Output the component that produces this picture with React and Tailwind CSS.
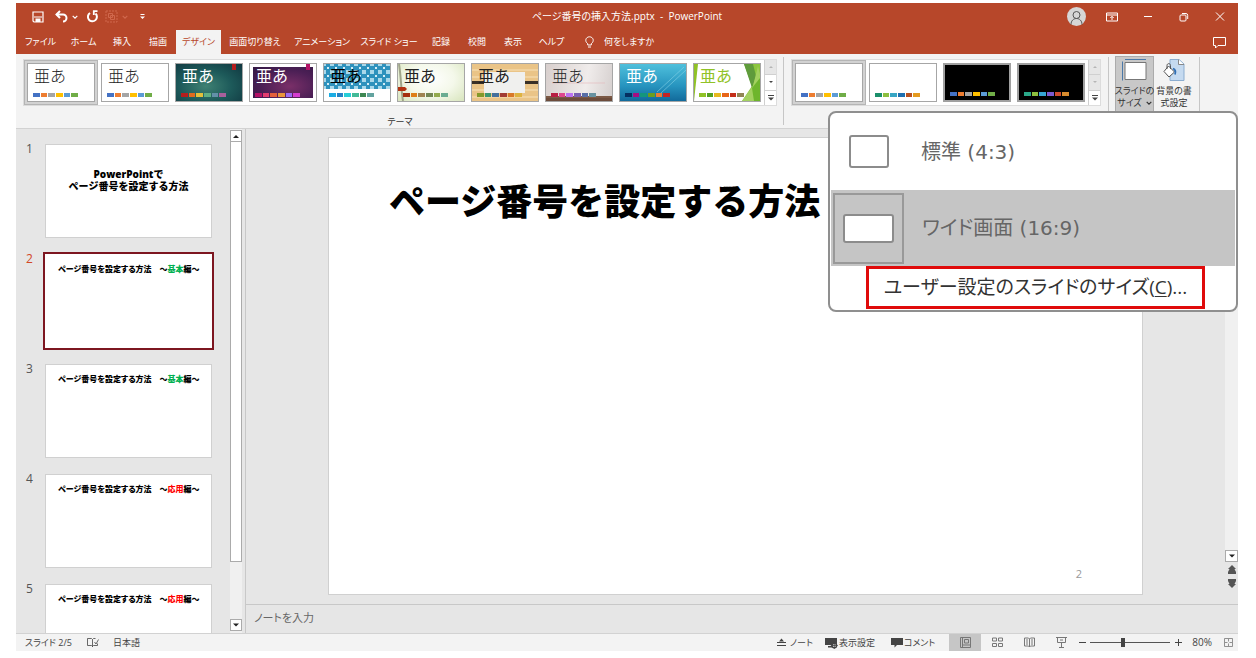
import { useState } from "react";

const tabs = [
  { label: "ファイル", width: "w-[45px]" },
  { label: "ホーム", width: "w-[41px]" },
  { label: "挿入", width: "w-9" },
  { label: "描画", width: "w-9" },
  { label: "デザイン", width: "w-[45px]" },
  { label: "画面切り替え", width: "w-[68px]" },
  { label: "アニメーション", width: "w-[66px]" },
  { label: "スライド ショー", width: "w-[68px]" },
  { label: "記録", width: "w-9" },
  { label: "校閲", width: "w-9" },
  { label: "表示", width: "w-9" },
  { label: "ヘルプ", width: "w-[41px]" },
];

const office = ["#4472c4", "#ed7d31", "#a5a5a5", "#ffc000", "#5b9bd5", "#70ad47"];

const themes = [
  { name: "Office", swatches: office, text: "font-light text-[#222]" },
  { name: "Office 2", swatches: office, text: "font-light text-[#222]" },
  {
    name: "イオン",
    swatches: ["#b31e1e", "#e06b1e", "#e3c03a", "#5fae84", "#6390a8", "#a8609c"],
    text: "text-white",
    bg: "bg-[radial-gradient(ellipse_at_45%_60%,#3f8173_0%,#1d5a5a_50%,#10363f_100%)]",
    art: <path d="M56 0h4v6h-4z" fill="#b31e1e" />,
  },
  {
    name: "イオン ボードルーム",
    swatches: ["#b31166", "#e33d6f", "#e45f3c", "#e9943a", "#9b6bf2", "#d53dd0"],
    text: "text-white",
    bg: "bg-[radial-gradient(ellipse_at_60%_60%,#7a2f68_0%,#4b1f55_50%,#2c1740_100%)]",
    art: (
      <>
        <path d="M1 1h64v35H1z" fill="none" stroke="#fff" strokeWidth="4" />
        <path d="M56 0h4v6h-4z" fill="#b31166" />
      </>
    ),
  },
  {
    name: "インテグラル",
    swatches: ["#1cade4", "#2683c6", "#27ced7", "#42ba97", "#3e8853", "#62a39f"],
    text: "text-black",
    bg: "bg-white",
    art: (
      <>
        <defs>
          <pattern id="integral" width="8" height="8" patternUnits="userSpaceOnUse">
            <path d="M0 0h8v8H0z" fill="#a9d8ea" />
            <path d="M2 0h4v2h2v4H6v2H2V6H0V2h2z" fill="#2e92bd" />
            <path d="M3 3h2v2H3z" fill="#d6eef6" />
          </pattern>
        </defs>
        <path d="M0 0h66v25H0z" fill="url(#integral)" />
      </>
    ),
  },
  {
    name: "ウィスプ",
    swatches: ["#a53010", "#de7e18", "#9f8351", "#728653", "#92aa4c", "#6aac91"],
    text: "text-[#222]",
    bg: "bg-[radial-gradient(ellipse_at_50%_40%,#ffffff_0%,#f4f8ea_50%,#d8e5bd_100%)]",
    art: (
      <>
        <path d="M1 0c2 12 2 25 4 37" fill="none" stroke="#a0a68a" strokeWidth="2" />
        <path d="M0 23h7l2 2-2 2H0z" fill="#b33512" />
      </>
    ),
  },
  {
    name: "オーガニック",
    swatches: ["#83992a", "#3c9770", "#44709d", "#a23c33", "#d97828", "#deb340"],
    text: "text-[#222]",
    bg: "bg-[#eac487]",
    art: (
      <>
        <path d="M0 6h66M0 13h66M0 26h66M0 33h66" stroke="#f1d3a0" strokeWidth="2" />
        <path d="M0 17h66v3H0z" fill="#3a3026" />
        <path d="M12 8h41v21H12z" fill="#f0f0ee" />
      </>
    ),
  },
  {
    name: "ギャラリー",
    swatches: ["#b71e42", "#de478e", "#bc72f0", "#795faf", "#586ea6", "#6892a0"],
    text: "font-light text-[#222]",
    bg: "bg-[linear-gradient(100deg,#d8cfcd,#f0eceb_60%,#d5cfce)]",
    art: (
      <>
        <path d="M0 32h66v5H0z" fill="#6d4c3b" />
        <path d="M0 33h66" stroke="#8b6650" />
        <path d="M6 19h53" stroke="#e4b5b9" strokeWidth=".6" />
      </>
    ),
  },
  {
    name: "スライス",
    swatches: ["#052f61", "#a50e82", "#14967c", "#6a9e1f", "#e87d37", "#c62324"],
    text: "text-white",
    bg: "bg-[linear-gradient(180deg,#4fc0dc,#2693be_60%,#126a9b)]",
    art: (
      <path d="M37 28 64 3M41 29 66 6" stroke="#8bd6ea" strokeWidth=".8" opacity=".7" />
    ),
  },
  {
    name: "ファセット",
    swatches: ["#90c226", "#54a021", "#e6b91e", "#e76618", "#c42f1a", "#918655"],
    text: "text-[#90c226]",
    bg: "bg-white",
    art: (
      <>
        <path d="M0 0h4L0 37z" fill="#90c226" />
        <path d="M50 0h16v37H48l10-15z" fill="#8cc63f" />
        <path d="M50 0h9l3 12-4 12z" fill="#5f9b3c" />
        <path d="m59 22 5-20 2 8v27H48z" fill="#a3d160" />
        <path d="m58 24 8-10v23h-6z" fill="#6eb52c" />
      </>
    ),
  },
];

const variants = [
  { name: "バリエーション 1", swatches: office, bg: "bg-white" },
  {
    name: "バリエーション 2",
    swatches: ["#1b8f6b", "#8cbf3f", "#37a6c4", "#1e6fb0", "#b8501f", "#e59a1e"],
    bg: "bg-white",
  },
  { name: "バリエーション 3", swatches: office, bg: "bg-black", dark: true },
  {
    name: "バリエーション 4",
    swatches: ["#2aa889", "#8cbf3f", "#37a6d4", "#7d5bd0", "#cf4a2c", "#d98b2e"],
    bg: "bg-black",
    dark: true,
  },
];

const slides = [
  { id: 1 },
  { id: 2, part: "基本", color: "text-[#00b050]" },
  { id: 3, part: "基本", color: "text-[#00b050]" },
  { id: 4, part: "応用", color: "text-[#ff0000]" },
  { id: 5, part: "応用", color: "text-[#ff0000]" },
];

function Icon({ children, className = "size-3", viewBox = "0 0 12 12" }) {
  return (
    <svg
      viewBox={viewBox}
      className={className}
      fill="none"
      stroke="currentColor"
      aria-hidden="true"
    >
      {children}
    </svg>
  );
}

function Chevron({ className = "size-[6px]" }) {
  return (
    <Icon className={className} viewBox="0 0 6 6">
      <path d="m.7 1.8 2.3 2.3 2.3-2.3" strokeWidth="1.2" />
    </Icon>
  );
}

function ArrowButton({ up, label }) {
  return (
    <button
      aria-label={label}
      className="flex h-3 w-full shrink-0 items-center justify-center border border-[#ababab] bg-white text-[#222]"
    >
      <Icon className="size-[6px]" viewBox="0 0 6 6">
        <path d={up ? "M0 5h6L3 2z" : "M0 1.500h6l-3 3z"} fill="currentColor" stroke="none" />
      </Icon>
    </button>
  );
}

function Thumb({ item, sample, selected, onClick }) {
  return (
    <button
      aria-label={item.name}
      aria-pressed={selected}
      onClick={onClick}
      className={`h-[45px] w-[74px] shrink-0 p-[3px] ${
        selected ? "bg-[#d2d2d2] ring-1 ring-[#b5b5b5] ring-inset" : ""
      }`}
    >
      <span
        className={`relative flex h-[39px] flex-col items-start overflow-hidden pb-1 pl-[5px] ${
          item.dark ? "border-2 border-[#a0a0a0]" : "border border-[#a6a6a6]"
        } ${item.bg || "bg-white"} ${sample ? "justify-between" : "justify-end"}`}
      >
        {item.art && (
          <svg
            viewBox="0 0 66 37"
            preserveAspectRatio="none"
            className="absolute inset-0 h-full w-full"
            aria-hidden="true"
          >
            {item.art}
          </svg>
        )}
        {sample && (
          <span
            className={`relative pt-[2px] pl-px text-base leading-5 [font-feature-settings:normal] ${item.text}`}
          >
            亜あ
          </span>
        )}
        <span className="relative flex w-[45px] gap-px">
          {item.swatches.map((color, i) => (
            <i key={i} className="h-1 flex-1" style={{ backgroundColor: color }} />
          ))}
        </span>
      </span>
    </button>
  );
}

function Gallery({ items, sample, disabled }) {
  const [selected, setSelected] = useState(0);

  return (
    <div className="flex h-[47px] shrink-0 border border-[#dcdcdc] bg-white">
      {items.map((item, i) => (
        <Thumb
          key={item.name}
          item={item}
          sample={sample}
          selected={selected === i}
          onClick={() => setSelected(i)}
        />
      ))}
      <div className="flex w-3 flex-col divide-y divide-[#d0d0d0] border-l border-[#d0d0d0]">
        <button
          aria-label="前の行"
          className="flex flex-1 items-center justify-center bg-[#e6e6e6] text-[#b5b5b5]"
        >
          <Icon className="size-1" viewBox="0 0 4 4">
            <path d="M0 3h4L2 1z" fill="currentColor" stroke="none" />
          </Icon>
        </button>
        <button
          aria-label="次の行"
          className={`flex flex-1 items-center justify-center ${
            disabled ? "bg-[#e6e6e6] text-[#b5b5b5]" : "text-[#444]"
          }`}
        >
          <Icon className="size-1" viewBox="0 0 4 4">
            <path d="M0 1h4L2 3z" fill="currentColor" stroke="none" />
          </Icon>
        </button>
        <button aria-label="その他" className="flex flex-1 items-center justify-center text-[#444]">
          <Icon className="size-[6px]" viewBox="0 0 6 6">
            <path d="M0 .5h6" />
            <path d="M0 2.500h6l-3 3z" fill="currentColor" stroke="none" />
          </Icon>
        </button>
      </div>
    </div>
  );
}

function TitleBar() {
  return (
    <div className="grid h-[27px] grid-cols-[1fr_auto_1fr] items-center">
      <div className="flex items-center pl-4">
        <button aria-label="上書き保存">
          <Icon>
            <path d="M1 1h10v10H2L1 10z" strokeWidth="1.200" />
            <path d="M3.500 11V7.500h5V11z" fill="currentColor" stroke="none" />
            <path d="M2 6h8" />
          </Icon>
        </button>
        <button aria-label="元に戻す" className="ml-[11px]">
          <Icon className="size-[13px]" viewBox="0 0 13 13">
            <path d="M1.500 4.500h6.500a3.500 3.500 0 0 1 0 7" strokeWidth="2" />
            <path d="M5 1 1.500 4.500 5 8" strokeWidth="2" />
          </Icon>
        </button>
        <button aria-label="元に戻す履歴" className="ml-1">
          <Chevron />
        </button>
        <button aria-label="やり直し" className="ml-2">
          <Icon className="size-[13px]" viewBox="0 0 13 13">
            <path d="M4 3A4.500 4.500 0 1 0 9.500 3.500" strokeWidth="2" />
            <path d="M7 1.200h4.500M7.800.5v4.500" strokeWidth="1.800" />
          </Icon>
        </button>
        <button aria-label="グループ化" className="ml-[6px] text-[#d0684d]">
          <Icon className="size-[13px]" viewBox="0 0 13 13">
            <path d="M1 1h11v11H1z" strokeDasharray="2 1" />
            <path d="M3.500 3.500h4v4h-4zM5.500 5.500h4v4h-4z" />
          </Icon>
        </button>
        <button aria-label="グループ化のオプション" className="ml-1 text-[#d0684d]">
          <Chevron />
        </button>
        <button aria-label="クイック アクセス ツール バーのユーザー設定" className="ml-3">
          <Icon className="size-[5px]" viewBox="0 0 5 5">
            <path d="M.5.500h4" />
            <path d="M0 2.500h5L2.500 5z" fill="currentColor" stroke="none" />
          </Icon>
        </button>
      </div>
      <h1 className="text-[10px] whitespace-pre">ページ番号の挿入方法.pptx  -  PowerPoint</h1>
      <div className="flex items-center justify-end">
        <button aria-label="アカウント" className="flex w-9 justify-center">
          <span className="flex size-[19px] items-end justify-center rounded-full bg-[#d6d6d6] text-[#555]">
            <Icon className="size-[17px]" viewBox="0 0 17 17">
              <circle cx="8.500" cy="6" r="3.500" />
              <path d="M3 15.500c0-8 11-8 11 0" />
            </Icon>
          </span>
        </button>
        <button aria-label="リボンの表示オプション" className="flex w-9 justify-center">
          <Icon>
            <path d="M.5 2h11v8H.5zM.5 4h11M6 9V5.500M4.300 7 6 5.300 7.700 7" />
          </Icon>
        </button>
        <button aria-label="最小化" className="flex w-9 justify-center">
          <Icon>
            <path d="M2 5.500h8" />
          </Icon>
        </button>
        <button aria-label="元に戻す (縮小)" className="flex w-9 justify-center">
          <Icon>
            <rect x="2" y="4" width="6" height="6" rx="1" />
            <path d="M4 2.500h4A1.800 1.800 0 0 1 9.700 4.300V8" />
          </Icon>
        </button>
        <button aria-label="閉じる" className="flex w-9 justify-center">
          <Icon>
            <path d="m2 1.500 8 8M10 1.500l-8 8" />
          </Icon>
        </button>
      </div>
    </div>
  );
}

function TabBar() {
  return (
    <nav className="flex h-6 items-stretch pl-[2px]">
      {tabs.map((tab) => (
        <button
          key={tab.label}
          className={`whitespace-nowrap ${tab.width} ${
            tab.label === "デザイン" ? "bg-[#f3f3f3] text-[#b7472a]" : ""
          }`}
        >
          {tab.label}
        </button>
      ))}
      <button className="ml-3 flex items-center gap-[9px]">
        <Icon className="h-3 w-[11px]" viewBox="0 0 11 12">
          <path d="M3.700 9V7.700C.2 5 1.900.8 5.500.8s5.300 4.200 1.800 6.900V9zM4 11h3" />
        </Icon>
        何をしますか
      </button>
      <button aria-label="コメント" className="mr-3 ml-auto">
        <Icon className="size-[13px]" viewBox="0 0 13 13">
          <path d="M.5 1.500h12v8H5L2.500 12V9.500h-2z" />
        </Icon>
      </button>
    </nav>
  );
}

function Ribbon() {
  return (
    <div className="flex h-[75px] border-b border-[#d2d2d2] bg-[#f3f3f3] text-[#333]">
      <section className="flex shrink-0 flex-col items-center pt-[5px] pr-[6px] pl-[7px]">
        <Gallery items={themes} sample />
        <h2 className="mt-2 leading-4">テーマ</h2>
      </section>
      <div className="my-[3px] w-px bg-[#c6c6c6]" />
      <section className="shrink-0 px-[7px] pt-[5px]">
        <Gallery items={variants} disabled />
      </section>
      <div className="my-[3px] w-px bg-[#c6c6c6]" />
      <section className="flex items-start gap-px px-[6px] pt-[2px] leading-3">
        <button className="flex h-[57px] w-[39px] flex-col items-center bg-[#c8c8c8] pt-[3px] whitespace-nowrap ring-1 ring-[#ababab] ring-inset">
          <Icon className="h-[22px] w-[26px]" viewBox="0 0 26 22">
            <path d="M3 .5h21M.5 2.500v19" stroke="#4a78a8" />
            <path d="M3 3.500h21v17H3z" fill="#fff" stroke="#777" />
          </Icon>
          <span className="mt-1">スライドの</span>
          <span className="flex items-center gap-1">
            サイズ
            <Chevron />
          </span>
        </button>
        <button className="flex h-[57px] w-[38px] flex-col items-center pt-[3px] whitespace-nowrap">
          <Icon className="h-[22px] w-[22px]" viewBox="0 0 22 22">
            <path d="M7 .5h9l5 4.500v16.500H7z" fill="#c5daf0" stroke="#8badd0" />
            <path d="M15.500.5V5.500H21" fill="#fff" stroke="#888" />
            <path d="m5.500 7 6 6-5.500 5-5-5.500z" fill="#fff" stroke="#555" />
            <path d="M4 10V6.500c0-2.500 3.500-2.500 3.500 0V10" stroke="#555" />
            <path d="M10 9.500c2.500 1 3 3 2 6" stroke="#2f6fb5" strokeWidth="1.800" />
          </Icon>
          <span className="mt-1">背景の書</span>
          <span>式設定</span>
        </button>
      </section>
      <div className="my-[3px] w-px bg-[#c6c6c6]" />
    </div>
  );
}

function SizeMenu() {
  return (
    <div
      role="menu"
      className="absolute top-[108px] right-0 z-10 flex h-[201px] w-[410px] flex-col rounded-lg border-2 border-[#8f8f8f] bg-white font-['DejaVu_Sans','Noto_Sans_CJK_JP',sans-serif] text-xl text-[#666]"
    >
      <button role="menuitem" className="flex h-[77px] items-center pl-[19px]">
        <span className="h-[33px] w-10 rounded-[3px] border-2 border-[#8c8c8c] bg-white" />
        <span className="pl-8">標準 (4:3)</span>
      </button>
      <button role="menuitem" className="mx-px flex h-[76px] items-center bg-[#c5c5c5] pl-[2px]">
        <span className="flex size-[71px] items-center justify-center border-2 border-[#999]">
          <span className="h-[29px] w-[51px] rounded-[3px] border-2 border-[#8c8c8c] bg-white" />
        </span>
        <span className="pl-[18px]">ワイド画面 (16:9)</span>
      </button>
      <button
        role="menuitem"
        className="ml-9 flex h-[43px] w-[339px] items-center justify-center border-3 border-[#e00b0b] font-['Open_Sans','Noto_Sans_CJK_JP',sans-serif] text-[19px] whitespace-nowrap text-[#333]"
      >
        <span>
          ユーザー設定のスライドのサイズ(<u className="underline-offset-2">C</u>)...
        </span>
      </button>
    </div>
  );
}

function SlidePanel() {
  const [current, setCurrent] = useState(2);

  return (
    <aside className="flex w-[230px] shrink-0 border-r border-[#c8c8c8]">
      <ol className="flex flex-1 flex-col gap-4 pt-[15px] pl-[10px]">
        {slides.map((slide) => (
          <li key={slide.id} className="flex shrink-0 items-start">
            <span
              className={`w-[19px] text-xs leading-[10px] ${
                slide.id === current ? "text-[#d24726]" : "text-[#555]"
              }`}
            >
              {slide.id}
            </span>
            <button
              onClick={() => setCurrent(slide.id)}
              className={`flex aspect-video w-[167px] flex-col border bg-white font-black whitespace-nowrap text-black ${
                slide.id === current ? "border-white ring-2 ring-[#7d1620]" : "border-[#d0d0d0]"
              }`}
            >
              {slide.part ? (
                <span className="pt-2 pl-3 text-left text-[8px] leading-3">
                  ページ番号を設定する方法　～<span className={slide.color}>{slide.part}</span>編～
                </span>
              ) : (
                <span className="w-full pt-[23px] text-center text-[10px] leading-3 [font-feature-settings:normal]">
                  PowerPointで
                  <br />
                  ページ番号を設定する方法
                </span>
              )}
            </button>
          </li>
        ))}
      </ol>
      <div className="mr-[3px] flex w-3 flex-col bg-[#f0f0f0] pt-[1px] pb-[2px]">
        <ArrowButton up label="上へスクロール" />
        <div className="flex-1">
          <div className="h-[88%] border border-t-0 border-[#ababab] bg-white" />
        </div>
        <ArrowButton label="下へスクロール" />
      </div>
    </aside>
  );
}

function Editor() {
  return (
    <main className="flex min-w-0 flex-1 flex-col">
      <div className="flex min-h-0 flex-1">
        <div className="min-w-0 flex-1 px-[82px] pt-2">
          <article className="flex aspect-video w-full flex-col justify-between border border-[#d0d0d0] bg-white px-[60px] pt-10 pb-3">
            <h2 className="text-4xl leading-[48px] font-black whitespace-nowrap text-black [font-feature-settings:normal]">
              ページ番号を設定する方法
            </h2>
            <p className="text-right text-[11px] text-[#999]">2</p>
          </article>
        </div>
        <div className="flex w-[13px] shrink-0 flex-col items-center gap-[3px] pb-4 text-[#555]">
          <div className="flex w-full flex-1 flex-col bg-[#f0f0f0] pt-[1px]">
            <ArrowButton up label="前へスクロール" />
            <div className="flex-1" />
            <ArrowButton label="次へスクロール" />
          </div>
          <button aria-label="前のスライド">
            <Icon className="h-[10px] w-2" viewBox="0 0 8 10">
              <path d="M4 0 8 4H6.500L8 7v2H0V7l1.500-3H0z" fill="currentColor" stroke="none" />
            </Icon>
          </button>
          <button aria-label="次のスライド">
            <Icon className="h-[10px] w-2" viewBox="0 0 8 10">
              <path d="M4 10 0 6h1.500L0 3V1h8v2L6.500 6H8z" fill="currentColor" stroke="none" />
            </Icon>
          </button>
        </div>
      </div>
      <input
        aria-label="ノート"
        placeholder="ノートを入力"
        className="h-[29px] shrink-0 border-t border-[#c8c8c8] bg-transparent px-2 pb-1 text-[11px] outline-none placeholder:text-[#666]"
      />
    </main>
  );
}

function StatusBar() {
  const [zoom, setZoom] = useState(40);

  return (
    <footer className="flex h-[17px] shrink-0 items-center bg-[#f3f3f3] pl-[9px] whitespace-nowrap text-[#444]">
      <span>スライド 2/5</span>
      <button aria-label="スペル チェック" className="ml-[15px]">
        <Icon className="h-[10px] w-3" viewBox="0 0 12 10">
          <path
            d="M5.500 1.500v7.500M.5.500h4l1 1 1-1h2M.5.500v7h4l1 1 1-1h4v-2M7.500 4l1.500 2L11.500 1.500"
            strokeWidth=".8"
          />
        </Icon>
      </button>
      <button className="ml-[14px]">日本語</button>

      <button className="ml-auto flex items-center gap-1">
        <Icon className="size-[9px]" viewBox="0 0 9 9">
          <path d="M0 4.500h9M0 7.500h9" />
          <path d="m4.500.5 2.500 3H2z" fill="currentColor" stroke="none" />
        </Icon>
        ノート
      </button>
      <button className="ml-3 flex items-center gap-px">
        <Icon className="h-3 w-[13px]" viewBox="0 0 13 12">
          <path d="M0 1h12v7H0zM3 9h4v1.500H3z" fill="currentColor" stroke="none" />
          <circle cx="9.300" cy="8.500" r="2.300" fill="#f3f3f3" strokeWidth="1.400" />
          <path d="M9.300 5v7M5.800 8.500h7" strokeWidth=".8" />
        </Icon>
        表示設定
      </button>
      <button className="ml-4 flex items-center gap-px">
        <Icon className="h-[10px] w-3" viewBox="0 0 12 10">
          <path d="M0 0h12v7H6L3.500 9.500V7H0z" fill="currentColor" stroke="none" />
        </Icon>
        コメント
      </button>

      <div className="ml-[14px] flex self-stretch text-[#777]">
        <button aria-label="標準" className="flex w-8 items-center justify-center bg-[#c6c6c6]">
          <Icon className="size-[11px]" viewBox="0 0 11 11">
            <path d="M.5.500h10v10H.5zM2.500.5v10M4.500 2.500h4v3.500h-4zM2.500 8h8" />
          </Icon>
        </button>
        <button aria-label="スライド一覧" className="flex w-8 items-center justify-center">
          <Icon className="size-[11px]" viewBox="0 0 11 11">
            <path d="M.5 1h4v3h-4zM6.500 1h4v3h-4zM.5 6.500h4v3h-4zM6.500 6.500h4v3h-4z" />
          </Icon>
        </button>
        <button aria-label="閲覧表示" className="flex w-8 items-center justify-center">
          <Icon className="size-[11px]" viewBox="0 0 11 11">
            <path d="M5.500 2v8M.5 1h4l1 1 1-1h4v8h-4l-1 1-1-1h-4zM2 3h2M2 5h2M2 7h2M7 3h2M7 5h2M7 7h2" />
          </Icon>
        </button>
        <button aria-label="スライド ショー" className="flex w-8 items-center justify-center">
          <Icon className="size-[11px]" viewBox="0 0 11 11">
            <path d="M0 .5h11M1.500.500v5h8v-5M5.500 5.500V10M3 10.500h5M4 3h3" />
          </Icon>
        </button>
      </div>

      <button aria-label="縮小" className="ml-[2px]">
        <Icon className="size-[7px]" viewBox="0 0 7 7">
          <path d="M0 3.500h7" />
        </Icon>
      </button>
      <input
        type="range"
        aria-label="ズーム"
        value={zoom}
        onChange={(e) => setZoom(e.target.value)}
        className="mx-1 h-px w-20 appearance-none bg-[#555] [&::-webkit-slider-thumb]:h-[9px] [&::-webkit-slider-thumb]:w-1 [&::-webkit-slider-thumb]:appearance-none [&::-webkit-slider-thumb]:bg-[#444]"
      />
      <button aria-label="拡大" className="ml-px">
        <Icon className="size-[7px]" viewBox="0 0 7 7">
          <path d="M0 3.500h7M3.500 0v7" />
        </Icon>
      </button>
      <button className="ml-[10px] text-[10px]">80%</button>
      <button aria-label="ウィンドウに合わせる" className="mr-[5px] ml-3 text-[#777]">
        <Icon className="size-[9px]" viewBox="0 0 9 9">
          <path
            d="M.5.500h8v8h-8zM4.500 1v2.500M4.500 5.500V8M1 4.500h2.500M5.500 4.500H8"
            strokeWidth=".8"
          />
        </Icon>
      </button>
    </footer>
  );
}

export default function App() {
  return (
    <div
      lang="ja"
      className="h-screen bg-white pt-[3px] pr-[18px] pb-[7px] pl-4 font-['Open_Sans','Noto_Sans_CJK_JP',sans-serif] text-[9px] [font-feature-settings:'palt']"
    >
      <div className="relative flex h-full flex-col">
        <header className="shrink-0 bg-[#b7472a] text-white">
          <TitleBar />
          <TabBar />
          <Ribbon />
        </header>
        <div className="flex min-h-0 flex-1 overflow-hidden border-b border-[#d2d2d2] bg-[#e6e6e6]">
          <SlidePanel />
          <Editor />
        </div>
        <StatusBar />
        <SizeMenu />
      </div>
    </div>
  );
}
